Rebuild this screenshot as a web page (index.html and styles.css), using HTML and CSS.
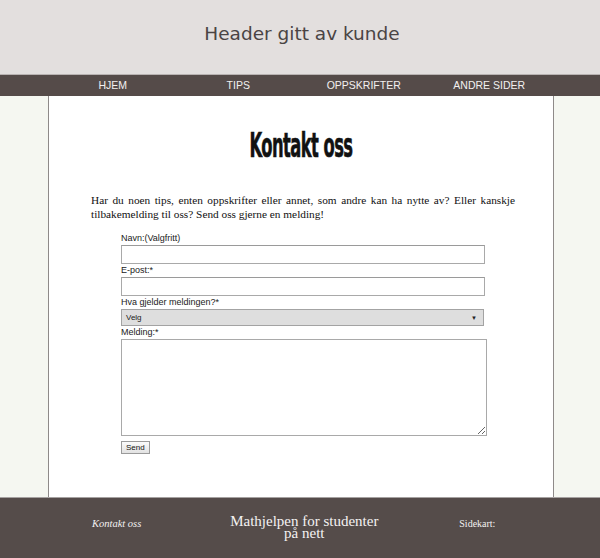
FILE: index.html
```html
<!DOCTYPE html>
<html lang="no">
<head>
<meta charset="utf-8">
<title>Kontakt oss</title>
<link rel="stylesheet" href="styles.css">
</head>
<body>
<header class="site-header">Header gitt av kunde</header>
<nav class="site-nav">
  <ul class="nav-list">
    <li>HJEM</li>
    <li>TIPS</li>
    <li>OPPSKRIFTER</li>
    <li>ANDRE SIDER</li>
  </ul>
</nav>
<main class="content">
  <h1 class="title">Kontakt oss</h1>
  <p class="intro">Har du noen tips, enten oppskrifter eller annet, som andre kan ha nytte av? Eller kanskje tilbakemelding til oss? Send oss gjerne en melding!</p>
  <form class="form">
    <label class="lbl">Navn:(Valgfritt)</label>
    <input class="field" type="text">
    <label class="lbl">E-post:*</label>
    <input class="field" type="text">
    <label class="lbl">Hva gjelder meldingen?*</label>
    <div class="select"><span>Velg</span><span class="arrow">&#9660;</span></div>
    <label class="lbl">Melding:*</label>
    <textarea class="area"></textarea>
    <button class="send" type="button">Send</button>
  </form>
</main>
<footer class="site-footer">
  <div class="f-left">Kontakt oss</div>
  <div class="f-mid">Mathjelpen for studenter<br>på nett</div>
  <div class="f-right">Sidekart:</div>
</footer>
</body>
</html>
```
FILE: styles.css
```css
html, body {
  margin: 0;
  padding: 0;
}
body {
  background: #f5f7f1;
  width: 600px;
  height: 558px;
  overflow: hidden;
}
.site-header {
  height: 75px;
  box-sizing: border-box;
  padding: 22px 0 0 4px;
  background: #e3dfde;
  border-bottom: 1px solid #b9b3b2;
  text-align: center;
  font-family: "DejaVu Sans", sans-serif;
  font-size: 18.5px;
  line-height: 24px;
  color: #4a4444;
}
.site-nav {
  height: 21px;
  background: #554b49;
}
.nav-list {
  list-style: none;
  margin: 0 0 0 50px;
  padding: 0;
  width: 502px;
  display: grid;
  grid-template-columns: repeat(4, 1fr);
  font-family: "Liberation Sans", Arial, sans-serif;
  font-size: 10.5px;
  line-height: 21px;
  color: #f2f0f0;
  text-align: center;
}
.content {
  display: block;
  margin-left: 48px;
  width: 506px;
  height: 401px;
  box-sizing: border-box;
  background: #fff;
  border-left: 1px solid #8e8a89;
  border-right: 1px solid #8e8a89;
  padding-top: 32px;
}
.title {
  margin: 0;
  text-align: center;
  font-family: "DejaVu Sans", sans-serif;
  font-stretch: condensed;
  font-weight: bold;
  font-size: 33px;
  line-height: 36px;
  color: #111;
  letter-spacing: -1px;
  transform: scaleX(0.55);
  -webkit-text-stroke: 0.6px #111;
}
.intro {
  margin: 29px 38px 0 42px;
  font-family: "Liberation Serif", "Times New Roman", serif;
  font-size: 11.3px;
  line-height: 14px;
  text-align: justify;
  color: #111;
}
.form {
  margin: 11px 0 0 72px;
  display: flex;
  flex-direction: column;
  align-items: flex-start;
  font-family: "Liberation Sans", Arial, sans-serif;
}
.lbl {
  font-size: 9px;
  line-height: 13px;
  color: #222;
}
.field {
  width: 364px;
  height: 19px;
  box-sizing: border-box;
  margin: 0;
  border: 1px solid #a9a9a9;
  border-top-color: #9a9a9a;
  background: #fff;
  padding: 0;
}
.select {
  width: 363px;
  height: 17px;
  box-sizing: border-box;
  margin-top: 0;
  border: 1px solid #a3a3a3;
  background: #dedede;
  display: flex;
  justify-content: space-between;
  align-items: center;
  padding: 0 6px 0 4px;
  font-size: 8px;
  color: #222;
}
.arrow {
  font-size: 6px;
}
.area {
  width: 366px;
  height: 97px;
  box-sizing: border-box;
  margin: 0;
  border: 1px solid #a9a9a9;
  resize: both;
  padding: 0;
}
.send {
  margin-top: 5px;
  height: 13px;
  padding: 0 4px;
  font-family: "Liberation Sans", Arial, sans-serif;
  font-size: 8px;
  line-height: 11px;
  border: 1px solid #9a9a9a;
  background: linear-gradient(#fbfbfb, #e2e2e2);
  color: #111;
}
.site-footer {
  height: 62px;
  box-sizing: border-box;
  background: #554c4a;
  border-top: 1px solid #a6a2a1;
  display: flex;
  align-items: flex-start;
  color: #f4f2f2;
  font-family: "Liberation Serif", "Times New Roman", serif;
}
.f-left {
  margin: 20px 0 0 92px;
  font-style: italic;
  font-size: 10.5px;
}
.f-mid {
  margin: 17px 0 0 88px;
  width: 150px;
  text-align: center;
  font-size: 15px;
  line-height: 12px;
}
.f-right {
  margin: 20px 0 0 80px;
  font-size: 10px;
}
```
